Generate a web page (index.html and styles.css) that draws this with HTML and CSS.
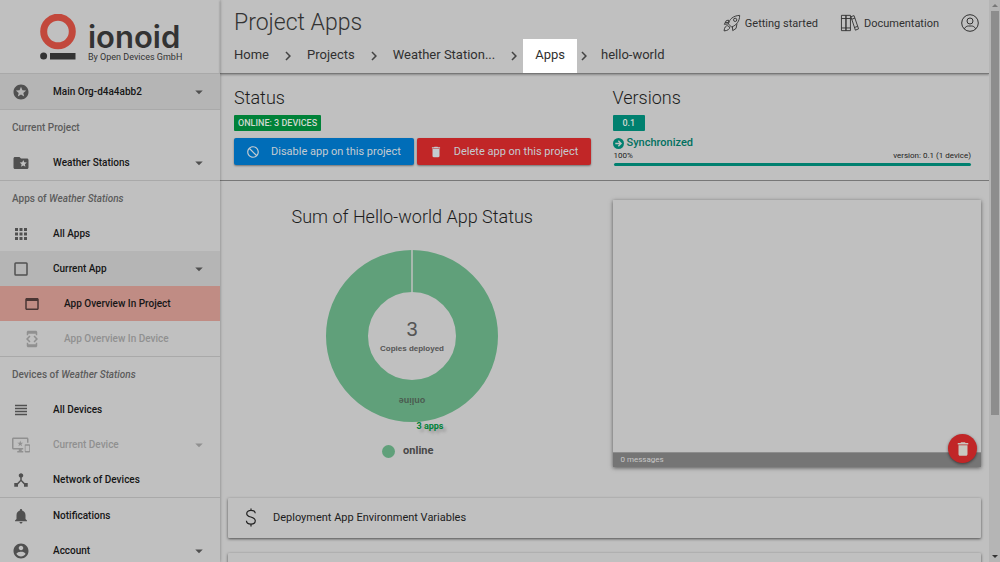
FILE: index.html
```html
<!DOCTYPE html>
<html lang="en">
<head>
<meta charset="utf-8">
<title>Project Apps</title>
<link rel="stylesheet" href="styles.css">
</head>
<body>
<svg class="defs" aria-hidden="true">
  <symbol id="drop" viewBox="0 0 24 24"><path d="M7 10l5 5 5-5z"/></symbol>
  <symbol id="chevron" viewBox="0 0 24 24"><path d="M10 6L8.59 7.41 13.17 12l-4.58 4.59L10 18l6-6z"/></symbol>
  <symbol id="trash" viewBox="0 0 24 24"><path d="M6 19c0 1.1.9 2 2 2h8c1.1 0 2-.9 2-2V7H6v12zM19 4h-3.500l-1-1h-5l-1 1H5v2h14V4z"/></symbol>
</svg>
<aside class="sidebar">
  <a class="logo" href="#">
    <svg class="logo-mark" viewBox="0 0 36 46"><circle cx="18" cy="17.500" r="14.300" fill="none" stroke="#c2483c" stroke-width="7"/><circle cx="3.600" cy="42" r="3.500" fill="#333"/><path d="M10 39h25.500v6.500H10z" fill="#333"/></svg>
    <span class="logo-text"><span class="logo-name">ionoid</span><span class="logo-sub">By Open Devices GmbH</span></span>
  </a>
  <nav class="menu">
    <a class="item shaded" href="#"><svg class="icon" viewBox="0 0 24 24"><path d="M11.990 2C6.470 2 2 6.480 2 12s4.470 10 9.990 10C17.520 22 22 17.520 22 12S17.520 2 11.990 2zm4.240 16L12 15.450 7.770 18l1.120-4.810-3.730-3.230 4.920-.42L12 5l1.920 4.530 4.920.42-3.730 3.230L16.230 18z"/></svg><span>Main Org-d4a4abb2</span><svg class="caret"><use href="#drop"/></svg></a>
    <hr>
    <h2 class="label">Current Project</h2>
    <a class="item" href="#"><svg class="icon" viewBox="0 0 24 24"><path d="M20 6h-8l-2-2H4c-1.100 0-1.990.9-1.990 2L2 18c0 1.100.9 2 2 2h16c1.100 0 2-.9 2-2V8c0-1.100-.9-2-2-2zm-2.060 11L15 15.280 12.060 17l.78-3.330-2.590-2.240 3.410-.29L15 8l1.340 3.140 3.410.29-2.590 2.240.78 3.330z"/></svg><span>Weather Stations</span><svg class="caret"><use href="#drop"/></svg></a>
    <hr>
    <h2 class="label">Apps of <em>Weather Stations</em></h2>
    <a class="item" href="#"><svg class="icon" viewBox="0 0 24 24"><path d="M4 8h4V4H4v4zm6 12h4v-4h-4v4zm-6 0h4v-4H4v4zm0-6h4v-4H4v4zm6 0h4v-4h-4v4zm6-10v4h4V4h-4zm-6 4h4V4h-4v4zm6 6h4v-4h-4v4zm0 6h4v-4h-4v4z"/></svg><span>All Apps</span></a>
    <a class="item shaded" href="#"><svg class="icon" viewBox="0 0 24 24"><path d="M19 3H5a2 2 0 0 0-2 2v14a2 2 0 0 0 2 2h14a2 2 0 0 0 2-2V5a2 2 0 0 0-2-2zm0 16H5V5h14v14z"/></svg><span>Current App</span><svg class="caret"><use href="#drop"/></svg></a>
    <a class="item sub active" href="#"><svg class="icon" viewBox="0 0 24 24"><path d="M19 4H5c-1.110 0-2 .9-2 2v12c0 1.100.89 2 2 2h14c1.100 0 2-.9 2-2V6c0-1.100-.9-2-2-2zm0 14H5V8h14v10z"/></svg><span>App Overview In Project</span></a>
    <a class="item sub disabled" href="#"><svg class="icon" viewBox="0 0 24 24"><path d="M7 5h10v2h2V3c0-1.100-.9-1.990-2-1.990L7 1c-1.100 0-2 .9-2 2v4h2V5zm8.410 11.590L20 12l-4.590-4.590L14 8.830 17.170 12 14 15.170l1.410 1.420zM10 15.170L6.830 12 10 8.830 8.590 7.410 4 12l4.590 4.590L10 15.170zM17 19H7v-2H5v4c0 1.100.9 2 2 2h10c1.100 0 2-.9 2-2v-4h-2v2z"/></svg><span>App Overview In Device</span></a>
    <hr>
    <h2 class="label">Devices of <em>Weather Stations</em></h2>
    <a class="item" href="#"><svg class="icon" viewBox="0 0 24 24"><path d="M4 15h16v-2H4v2zm0 4h16v-2H4v2zm0-8h16V9H4v2zm0-6v2h16V5H4z"/></svg><span>All Devices</span></a>
    <a class="item disabled" href="#"><svg class="icon" viewBox="0 0 24 24"><path d="M23 11.010L18 11c-.55 0-1 .45-1 1v9c0 .55.45 1 1 1h5c.55 0 1-.45 1-1v-9c0-.55-.45-.99-1-.99zM23 20h-5v-7h5v7zM20 2H2C.89 2 0 2.890 0 4v12c0 1.100.89 2 2 2h7v2H7v2h8v-2h-2v-2h2v-2H2V4h18v5h2V4c0-1.110-.9-2-2-2zm-8.030 7L11 6l-.97 3H7l2.470 1.760-.94 2.910 2.470-1.800 2.470 1.800-.94-2.910L15 9h-3.030z"/></svg><span>Current Device</span><svg class="caret"><use href="#drop"/></svg></a>
    <a class="item" href="#"><svg class="icon" viewBox="0 0 24 24"><path d="M17 16l-4-4V8.820C14.160 8.400 15 7.300 15 6c0-1.660-1.340-3-3-3S9 4.340 9 6c0 1.300.84 2.400 2 2.820V12l-4 4H3v5h5v-3.050l4-4.200 4 4.200V21h5v-5h-4z"/></svg><span>Network of Devices</span></a>
    <hr>
    <a class="item" href="#"><svg class="icon" viewBox="0 0 24 24"><path d="M12 22c1.100 0 2-.9 2-2h-4c0 1.100.89 2 2 2zm6-6v-5c0-3.070-1.640-5.640-4.500-6.320V4c0-.83-.67-1.500-1.500-1.500s-1.500.67-1.500 1.500v.68C7.630 5.360 6 7.920 6 11v5l-2 2v1h16v-1l-2-2z"/></svg><span>Notifications</span></a>
    <a class="item" href="#"><svg class="icon" viewBox="0 0 24 24"><path d="M12 2C6.480 2 2 6.480 2 12s4.480 10 10 10 10-4.480 10-10S17.520 2 12 2zm0 3c1.660 0 3 1.340 3 3s-1.340 3-3 3-3-1.340-3-3 1.340-3 3-3zm0 14.200c-2.500 0-4.710-1.280-6-3.220.03-1.990 4-3.080 6-3.080 1.990 0 5.970 1.090 6 3.080-1.290 1.940-3.500 3.220-6 3.220z"/></svg><span>Account</span><svg class="caret"><use href="#drop"/></svg></a>
  </nav>
</aside>
<main class="main">
  <header class="top">
    <div class="top-row">
      <h1 class="title">Project Apps</h1>
      <nav class="links">
        <a href="#"><svg class="rocket" viewBox="0 0 20 20"><path d="M6 11C7 6 11 2 18.500 1.500 18.500 8 15 12.500 9.500 14.500zM6.500 9.500L6 6.800 3.500 7.500 1.500 11.500 5.500 11M10.500 14.200l.3 4.300 3.700-2.500 1-5M5 13C3 13 1.500 15 1.200 18.800 5 18.500 7.500 17 7.500 14.500zM2.500 9.500h3.500"/><circle cx="13.500" cy="6.500" r="1.800"/></svg>Getting started</a>
        <a href="#"><svg class="books" viewBox="0 0 21 20"><path d="M1 1.500h5v17H1zM6 1.500h5v17H6zM1 5h10M1 15.500h10M11.500 3l3.500-1.200L20 16.500 16.500 18zM12.500 5.800L16 4.500M15.500 15l3.500-1.300"/></svg>Documentation</a>
        <a href="#" aria-label="Profile"><svg class="user" viewBox="0 0 18 18"><circle cx="9" cy="9" r="8.300"/><circle cx="9" cy="7" r="3"/><path d="M3.300 14.800C4.500 12.700 6 12 7.500 12h3c1.500 0 3 .7 4.200 2.800"/></svg></a>
      </nav>
    </div>
    <nav class="crumbs">
      <a class="crumb" href="#">Home</a><svg><use href="#chevron"/></svg>
      <a class="crumb" href="#">Projects</a><svg><use href="#chevron"/></svg>
      <a class="crumb" href="#">Weather Station...</a><svg><use href="#chevron"/></svg>
      <a class="crumb spot" href="#">Apps</a><svg><use href="#chevron"/></svg>
      <a class="crumb" href="#">hello-world</a>
    </nav>
  </header>
  <section class="summary cols">
    <div class="status">
      <h2 class="heading">Status</h2>
      <span class="badge green">ONLINE: 3 DEVICES</span>
      <div class="actions">
        <button class="btn blue" type="button"><svg viewBox="0 0 24 24"><path d="M12 2C6.480 2 2 6.480 2 12s4.480 10 10 10 10-4.480 10-10S17.520 2 12 2zM4 12c0-4.420 3.580-8 8-8 1.850 0 3.550.63 4.900 1.690L5.690 16.900C4.630 15.550 4 13.850 4 12zm8 8c-1.850 0-3.550-.63-4.900-1.690L18.310 7.100C19.370 8.450 20 10.150 20 12c0 4.420-3.580 8-8 8z" transform="matrix(-1 0 0 1 24 0)"/></svg>Disable app on this project</button>
        <button class="btn red" type="button"><svg><use href="#trash"/></svg>Delete app on this project</button>
      </div>
    </div>
    <div class="versions">
      <h2 class="heading">Versions</h2>
      <span class="badge teal">0.1</span>
      <p class="sync"><svg viewBox="0 0 12 12"><circle cx="6" cy="6" r="6" fill="#00806f"/><path d="M2.500 6h6M5.800 3l3 3-3 3" fill="none" stroke="#c0c0c0" stroke-width="1.500"/></svg>Synchronized</p>
      <div class="rollout">
        <div class="rollout-text"><span>100%</span><span>version: 0.1 (1 device)</span></div>
        <div class="bar"></div>
      </div>
    </div>
  </section>
  <section class="panels cols">
    <div class="chart">
      <h2 class="heading">Sum of Hello-world App Status</h2>
      <svg class="donut" viewBox="0 0 172 188">
        <circle cx="86" cy="88" r="65" fill="none" stroke="#60a07a" stroke-width="42"/>
        <path d="M86 1v44" stroke="#c0c0c0" stroke-width="1.500"/>
        <text class="count" x="86" y="88">3</text>
        <text class="copies" x="86" y="103">Copies deployed</text>
        <text class="slice" transform="translate(86 150) rotate(180)">online</text>
        <text class="apps" x="104" y="181">3 apps</text>
      </svg>
      <p class="legend"><i></i>online</p>
    </div>
    <div class="log">
      <div class="log-body"></div>
      <div class="log-foot">0 messages</div>
      <button class="fab" type="button" aria-label="Clear messages"><svg><use href="#trash"/></svg></button>
    </div>
  </section>
  <section class="cards">
    <button class="card" type="button"><svg viewBox="0 0 12 20"><path d="M10.500 5.500C10.200 3.500 8.500 2.600 6 2.600S1.500 3.900 1.500 6C1.500 10.500 10.500 8.500 10.500 13.500 10.500 16 8.500 17 6 17S1.300 16 1.200 13.500M6 .5v2.100M6 17v2.500"/></svg>Deployment App Environment Variables</button>
    <div class="card next"></div>
  </section>
</main>
<div class="scroll" aria-hidden="true"><i class="up"></i><i class="thumb"></i><i class="down"></i></div>
</body>
</html>
```
FILE: styles.css
```css
* { box-sizing: border-box; }
body {
  margin: 0;
  height: 100vh;
  display: flex;
  overflow: hidden;
  background: #c0c0c0;
  color: #1c1c1c;
  font-family: Roboto, sans-serif;
  font-size: 11px;
}
a { color: inherit; text-decoration: none; }
h1, h2, p { margin: 0; font-weight: 300; }
button { font: inherit; border: 0; padding: 0; }
.defs { display: none; }

.sidebar {
  flex: 0 0 220px;
  z-index: 1;
  overflow: hidden;
  box-shadow: 0 0 3px rgba(0, 0, 0, .35);
}
.logo {
  display: flex;
  gap: 12px;
  height: 74px;
  padding: 14px 0 0 40px;
  border-bottom: 1px solid #a9a9a9;
}
.logo-mark { width: 36px; height: 46px; }
.logo-text { display: flex; flex-direction: column; color: #333; }
.logo-name { font: 600 31px/36px Inter, sans-serif; margin-top: 5px; height: 32px; }
.logo-sub { font-size: 9px; line-height: 12px; white-space: nowrap; }
hr { margin: 0; border: 0; height: 1px; background: #a9a9a9; }
.label {
  height: 35px;
  padding-left: 12px;
  line-height: 35px;
  font-size: 10px;
  font-weight: 500;
  color: #5c5c5c;
}
.item {
  display: flex;
  align-items: center;
  height: 35px;
  padding: 0 12px;
  font-size: 10px;
  font-weight: 500;
  color: #161616;
}
.item span { flex: 1; }
.icon { width: 18px; height: 18px; margin-right: 23px; fill: #505050; overflow: visible; }
.caret { width: 18px; height: 18px; fill: #505050; }
.shaded { background: #b5b5b5; }
.sub { padding-left: 23px; }
.active { background: #c08c84; }
.active .icon { fill: #4a3634; }
.disabled { color: #909090; }
.disabled svg { fill: #909090; }

.main { flex: 1; min-width: 0; display: flex; flex-direction: column; }
.main > * { flex-shrink: 0; }
.top { height: 74px; border-bottom: 1px solid #777; box-shadow: 0 1px 2px rgba(0, 0, 0, .3); }
.top-row { display: flex; justify-content: space-between; height: 39px; padding: 8px 10px 0 14px; }
.title { font-size: 23px; line-height: 30px; color: #333; }
.links { display: flex; align-items: center; gap: 22px; height: 30px; color: #303030; }
.links a { display: flex; align-items: center; gap: 4px; }
.links svg { fill: none; stroke: #303030; }
.rocket { width: 18px; height: 18px; }
.books { width: 20px; height: 18px; }
.user { width: 18px; height: 18px; }
.crumbs { display: flex; align-items: center; height: 34px; padding-left: 4px; font-size: 13px; color: #303030; }
.crumb { padding: 0 10px 2px; line-height: 32px; }
.crumbs svg { width: 18px; height: 18px; fill: #444; }
.crumb.spot { padding: 0 12px 2px; background: #fff; }
.crumb.spot + svg { margin: 0 -2px; }

.cols { display: grid; grid-template-columns: 1fr 1fr; gap: 16px; padding: 0 8px; }
.summary { height: 107px; padding-top: 13px; border-bottom: 1px solid #777; }
.status { padding-left: 6px; }
.heading { font-size: 18px; line-height: 22px; }
.badge {
  display: table;
  margin-top: 6px;
  padding: 0 4px;
  border-radius: 1px;
  line-height: 16px;
  font-size: 9px;
  font-weight: 500;
  color: #d0d8d0;
}
.green { background: #008239; }
.teal { background: #00806f; padding: 0 10px; }
.actions { display: flex; gap: 3px; margin-top: 7px; }
.btn {
  display: flex;
  align-items: center;
  gap: 11px;
  height: 27px;
  padding: 0 13px 0 12px;
  border-radius: 2px;
  white-space: nowrap;
  color: #c4cbd0;
  box-shadow: 0 1px 2px rgba(0, 0, 0, .4);
}
.btn svg { width: 14px; height: 14px; fill: currentColor; }
.blue { background: #006db8; }
.red { background: #c12627; }
.sync { display: flex; align-items: center; gap: 3px; margin-top: 5px; line-height: 14px; font-weight: 500; color: #00705f; }
.sync svg { width: 11px; height: 11px; }
.rollout { padding: 0 10px 0 1px; }
.rollout-text { display: flex; justify-content: space-between; font-size: 8px; line-height: 12px; }
.bar { height: 3px; margin-top: 1px; border-radius: 2px; background: #00806f; }

.panels { padding-top: 19px; }
.chart { display: flex; flex-direction: column; align-items: center; padding-top: 6px; }
.donut { width: 172px; height: 188px; margin-top: 20px; overflow: visible; }
.donut text { font-family: "Liberation Sans", sans-serif; text-anchor: middle; fill: #555; }
.donut .count { font-size: 20px; }
.donut .copies { font-size: 8px; font-weight: 700; }
.donut .slice { font-size: 9px; font-weight: 700; fill: #4b5b50; }
.donut .apps { font: 700 9px Roboto, sans-serif; fill: #008239; text-shadow: 3px 3px 3px rgba(0, 0, 0, .2); }
.legend { display: flex; align-items: center; gap: 8px; margin: 7px 9px 0 0; font: 700 11px/16px Roboto, sans-serif; color: #484848; }
.legend i { width: 13px; height: 13px; border-radius: 50%; background: #60a07a; }
.log {
  position: relative;
  display: flex;
  flex-direction: column;
  height: 267px;
  box-shadow: 0 1px 4px rgba(0, 0, 0, .55);
}
.log-body { flex: 1; }
.log-foot { border-top: 1px solid #8d8d8d; background: #757575; padding-left: 8px; font-size: 8px; line-height: 14px; color: #c8c8c8; }
.fab {
  position: absolute;
  right: 4px;
  bottom: 4px;
  width: 29px;
  height: 29px;
  display: grid;
  place-items: center;
  border-radius: 50%;
  background: #c12627;
  box-shadow: 0 1px 3px rgba(0, 0, 0, .5);
}
.fab svg { width: 18px; height: 18px; fill: #c8c8c0; }
.cards { display: flex; flex-direction: column; gap: 15px; padding: 31px 8px 0; }
.card {
  display: flex;
  align-items: center;
  gap: 16px;
  height: 40px;
  padding: 0 0 2px 17px;
  border-radius: 1px;
  background: #c0c0c0;
  color: #1c1c1c;
  box-shadow: 0 1px 3px rgba(0, 0, 0, .6);
}
.card svg { width: 12px; height: 19px; fill: none; stroke: #222; stroke-width: 1.300; }

.scroll { flex: 0 0 11px; display: flex; flex-direction: column; align-items: center; background: #b5b5b5; padding: 4px 0; }
.scroll i { display: block; }
.up, .down { border: 3px solid transparent; border-top-width: 0; border-bottom: 3px solid #777; }
.thumb { width: 8px; flex: 0 0 73%; margin-top: 4px; background: #8d8d8d; }
.down { margin-top: auto; border-width: 3px 3px 0; border-top-color: #333; }
```
